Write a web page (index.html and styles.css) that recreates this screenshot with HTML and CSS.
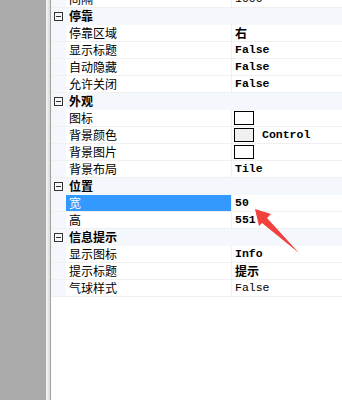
FILE: index.html
```html
<!DOCTYPE html>
<html>
<head>
<meta charset="utf-8">
<link rel="stylesheet" href="styles.css">
</head>
<body>
<div class="side"></div>
<div class="edge"></div>
<div class="grid">
  <div class="rows">
    <div class="row"><div class="m"></div><div class="n">间隔</div><div class="v plain">1000</div></div>
    <div class="head"><span class="tog"></span><span class="ht">停靠</span></div>
    <div class="row"><div class="m"></div><div class="n">停靠区域</div><div class="v cjk">右</div></div>
    <div class="row"><div class="m"></div><div class="n">显示标题</div><div class="v">False</div></div>
    <div class="row"><div class="m"></div><div class="n">自动隐藏</div><div class="v">False</div></div>
    <div class="row"><div class="m"></div><div class="n">允许关闭</div><div class="v">False</div></div>
    <div class="head"><span class="tog"></span><span class="ht">外观</span></div>
    <div class="row"><div class="m"></div><div class="n">图标</div><div class="v"><span class="sw"></span></div></div>
    <div class="row"><div class="m"></div><div class="n">背景颜色</div><div class="v"><span class="sw gray"></span><span class="swt">Control</span></div></div>
    <div class="row"><div class="m"></div><div class="n">背景图片</div><div class="v"><span class="sw"></span></div></div>
    <div class="row"><div class="m"></div><div class="n">背景布局</div><div class="v">Tile</div></div>
    <div class="head"><span class="tog"></span><span class="ht">位置</span></div>
    <div class="row"><div class="m"></div><div class="n sel">宽</div><div class="v">50</div></div>
    <div class="row"><div class="m"></div><div class="n">高</div><div class="v">551</div></div>
    <div class="head"><span class="tog"></span><span class="ht">信息提示</span></div>
    <div class="row"><div class="m"></div><div class="n">显示图标</div><div class="v">Info</div></div>
    <div class="row"><div class="m"></div><div class="n">提示标题</div><div class="v cjk">提示</div></div>
    <div class="row"><div class="m"></div><div class="n">气球样式</div><div class="v plain">False</div></div>
  </div>
</div>
<svg class="arrow" width="342" height="400" viewBox="0 0 342 400">
  <polygon points="255,209 271,214 267,218 299,253 262,223 259,226" fill="#f2403c"/>
</svg>
</body>
</html>
```
FILE: styles.css
```css
html, body {
  margin: 0;
  padding: 0;
}
body {
  width: 342px;
  height: 400px;
  overflow: hidden;
  display: flex;
  background: #ffffff;
  font-family: "Noto Sans CJK SC", "Liberation Sans", sans-serif;
  font-size: 12px;
  color: #000;
  position: relative;
}
.side {
  width: 46px;
  flex: none;
  background: #ababab;
}
.edge {
  width: 4px;
  flex: none;
  background: linear-gradient(to right, #f0f0f0 0, #f0f0f0 2px, #e2e2e2 2px, #e2e2e2 4px);
  border-right: 1px solid #a0a0a0;
}
.grid {
  flex: 1;
  overflow: hidden;
}
.rows {
  margin-top: -9px;
}
.row {
  display: grid;
  grid-template-columns: 15px 166px 1fr;
  height: 16px;
  border-bottom: 1px solid #f0f0f0;
}
.m {
  background: #f4f7fc;
}
.n {
  padding-left: 3px;
  line-height: 16px;
  border-right: 1px solid #f0f0f0;
  white-space: nowrap;
  overflow: hidden;
}
.n.sel {
  background: #3399ff;
  color: #fff;
}
.v {
  padding-left: 3px;
  line-height: 16px;
  font-family: "Liberation Mono", "Noto Sans CJK SC", monospace;
  font-weight: bold;
  font-size: 11.5px;
  display: flex;
  align-items: center;
  white-space: nowrap;
}
.v.plain {
  font-weight: normal;
}
.v.cjk {
  font-family: "Noto Sans CJK SC", sans-serif;
  font-size: 12px;
}
.sw {
  width: 18px;
  height: 12px;
  border: 1px solid #000;
  background: #fff;
  flex: none;
  margin-left: -1px;
}
.sw.gray {
  background: #f0f0f0;
}
.swt {
  margin-left: 8px;
}
.head {
  height: 16px;
  border-bottom: 1px solid #f4f7fc;
  background: #f4f7fc;
  display: flex;
  align-items: center;
}
.tog {
  width: 7px;
  height: 7px;
  border: 1px solid #333;
  margin-left: 3px;
  position: relative;
  flex: none;
}
.tog::after {
  content: "";
  position: absolute;
  left: 1px;
  right: 1px;
  top: 3px;
  height: 1px;
  background: #333;
}
.ht {
  margin-left: 6px;
  font-weight: bold;
  line-height: 16px;
}
.arrow {
  position: absolute;
  left: 0;
  top: 0;
  pointer-events: none;
}
```
